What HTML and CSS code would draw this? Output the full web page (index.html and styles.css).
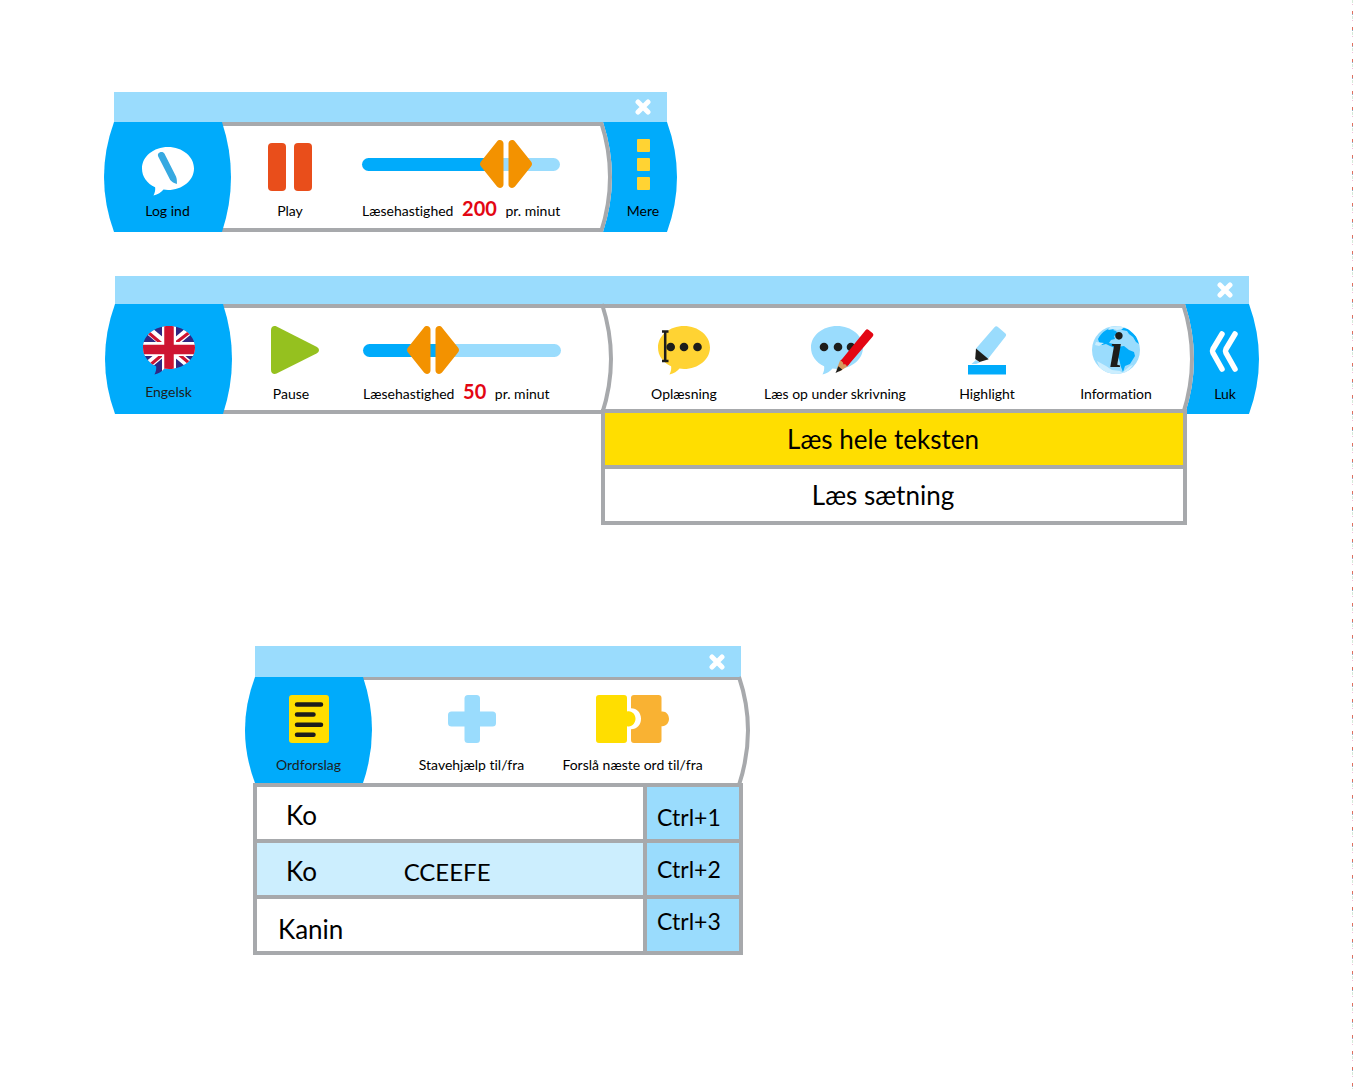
FILE: index.html
```html
<!DOCTYPE html>
<html lang="da">
<head>
<meta charset="utf-8">
<meta name="viewport" content="width=device-width, initial-scale=1">
<title>Læseværktøj</title>
<link rel="stylesheet" href="styles.css">
</head>
<body>
<svg class="defs" aria-hidden="true">
  <defs>
    <path id="bubble" d="M26 0C40.4 0 52 9.6 52 21.5S40.4 43 26 43c-1.500 0-3-.1-4.500-.4C19 45.500 16 47.500 11.500 48.500c1.500-3 2-6 1.600-8.300C5 36.500 0 29.800 0 21.500 0 9.600 11.600 0 26 0z"/>
    <clipPath id="bubble-clip"><use href="#bubble"/></clipPath>
    <clipPath id="globe-clip"><circle cx="24" cy="24" r="24"/></clipPath>
  </defs>
</svg>
<main class="page">

  <section class="panel panel--compact" aria-label="Oplæser">
    <header class="titlebar">
      <button class="close" type="button" aria-label="Luk vindue"><svg width="16" height="16" viewBox="0 0 16 16"><path d="M3 3l10 10M13 3L3 13"/></svg></button>
    </header>
    <div class="bar">
      <button class="tab" type="button">
        <svg class="tab__shape" viewBox="0 0 127 110" preserveAspectRatio="none"><path d="M10 0H118Q136 55 118 110H10Q-10 55 10 0z"/></svg>
        <svg class="icon" width="52" height="48" viewBox="0 0 52 48"><g transform="translate(0 4)"><use href="#bubble" fill="#fff"/><path fill="#36a9e1" d="M16.200 9.500c-.9-2 .1-3.400 1.500-4 1.700-.8 3.900-.5 4.800 1.300L34 29.600c.9 2.200 1 4.700.9 7.400-2.900-.7-5-2.200-6.700-4z"/></g></svg>
        <span class="label">Log ind</span>
      </button>
      <div class="main main--reader">
        <button class="tool" type="button">
          <svg class="icon" width="44" height="48" viewBox="0 0 44 48" fill="#e94e1b"><rect width="18" height="48" rx="4"/><rect x="26" width="18" height="48" rx="4"/></svg>
          <span class="label">Play</span>
        </button>
        <div class="speed">
          <input class="slider slider--fast" id="speed-a" type="range" min="0" max="247" value="200">
          <label class="label" for="speed-a">Læsehastighed <b>200</b> pr. minut</label>
        </div>
      </div>
      <button class="cap" type="button">
        <svg class="tab__shape" viewBox="0 0 78 110" preserveAspectRatio="none"><path d="M4 0H68Q88 55 68 110H4Q22 55 4 0z"/><path class="arc" d="M2 0Q20 55 2 110"/></svg>
        <svg class="icon" width="14" height="48" viewBox="0 0 14 48" fill="#ffd333"><rect x="1" y="-4" width="13" height="13" rx="1"/><rect x="1" y="15" width="13" height="13" rx="1"/><rect x="1" y="34" width="13" height="13" rx="1"/></svg>
        <span class="label">Mere</span>
      </button>
    </div>
  </section>

  <section class="panel panel--wide" aria-label="Oplæser, alle funktioner">
    <header class="titlebar titlebar--slim">
      <button class="close" type="button" aria-label="Luk vindue"><svg width="16" height="16" viewBox="0 0 16 16"><path d="M3 3l10 10M13 3L3 13"/></svg></button>
    </header>
    <div class="bar">
      <button class="tab" type="button">
        <svg class="tab__shape" viewBox="0 0 127 110" preserveAspectRatio="none"><path d="M10 0H118Q136 55 118 110H10Q-10 55 10 0z"/></svg>
        <svg class="icon" width="52" height="48" viewBox="0 0 52 48">
          <g clip-path="url(#bubble-clip)">
            <path fill="#312783" d="M0 0h52v49H0z"/>
            <path stroke="#fff" stroke-width="8" d="M-2 -2L54 45M54 -2L-2 45"/>
            <path stroke="#ce1431" stroke-width="3" d="M0 2L26 24M52 2L26 22M0 45L26 23M52 42L26 20"/>
            <path stroke="#fff" stroke-width="14" d="M26 0V49M0 23H52"/>
            <path stroke="#ce1431" stroke-width="9.500" d="M26 0V49M0 23.500H52"/>
          </g>
        </svg>
        <span class="label label--soft">Engelsk</span>
      </button>
      <div class="main main--reader">
        <button class="tool" type="button">
          <svg class="icon" width="56" height="48" viewBox="0 0 56 48"><path fill="#95c11f" d="M8 4C8 .8 10.800-.8 13.600.5L53.500 20.700c3.300 1.700 3.300 5 0 6.700L13.600 47.600C10.800 48.900 8 47.300 8 44z"/></svg>
          <span class="label">Pause</span>
        </button>
        <div class="speed">
          <input class="slider slider--slow" id="speed-b" type="range" min="0" max="167" value="50">
          <label class="label" for="speed-b">Læsehastighed <b>50</b> pr. minut</label>
        </div>
      </div>
      <div class="main main--tools">
        <svg class="divider" viewBox="0 0 12 110" preserveAspectRatio="none"><path class="arc" d="M1 0Q19 55 1 110"/></svg>
        <button class="tool" type="button" aria-haspopup="true" aria-expanded="true">
          <svg class="icon" width="52" height="48" viewBox="0 0 52 48"><use href="#bubble" fill="#ffd333"/><g fill="#1d1d1b"><circle cx="12.700" cy="21" r="4.300"/><circle cx="26" cy="21" r="4.300"/><circle cx="39.500" cy="21" r="4.300"/></g><path stroke="#1d1d1b" stroke-width="2.500" fill="none" d="M4 5.500h6.500M4 35h6.500M7.200 5.500V35"/></svg>
          <span class="label">Oplæsning</span>
        </button>
        <button class="tool" type="button">
          <svg class="icon" width="78" height="48" viewBox="-15 0 78 48"><use href="#bubble" fill="#9adcfd"/><g fill="#1d1d1b"><circle cx="13" cy="21" r="4.300"/><circle cx="27" cy="21" r="4.300"/><circle cx="40" cy="21" r="4.300"/></g><path fill="#e30613" d="M54.500 4.200c1-1.200 2-1.200 3.200-.3l3.700 3.200c1.200 1 1.300 2.200.3 3.400L37 39.500l-7.500-4.500z"/><path fill="#d69a5e" d="M29.300 34l7.700 6-8.500 5.500-3-2z"/><path fill="#e30613" d="M29.500 34.500l3-2 6 5-2.500 3c-1-2-2-2.400-3.600-2-.2-2-1-3.200-2.900-4z"/><path fill="#1d1d1b" d="M27.400 40.300l4 3.500-6.900 3.200z"/></svg>
          <span class="label">Læs op under skrivning</span>
        </button>
        <button class="tool" type="button">
          <svg class="icon" width="40" height="48" viewBox="0 0 40 48"><path fill="#9adcfd" d="M9 22.500L27.500 1.200c1-1.200 2.300-1.300 3.400-.3l7.300 6.300c1.100 1 1.300 2 .3 3.200L20.500 33.500zM9 34l4 2.500L9 38H4.500z"/><path fill="#1d1d1b" d="M9 22.500l12.700 10.700L12.500 36 8.200 33z"/><path fill="#00abfb" d="M1 39h38v9.500H1z"/></svg>
          <span class="label">Highlight</span>
        </button>
        <button class="tool" type="button">
          <svg class="icon" width="48" height="48" viewBox="0 0 48 48">
            <g clip-path="url(#globe-clip)">
              <path fill="#9adcfd" d="M0 0h48v48H0z"/>
              <path fill="#00abfb" d="M6 13C10 5 16 2 24 1l-3 3 3 1 2 3-4 2 1 3-4 1-2 3 3 1-2 2-4-2-4 1-3-3zM17 17l5 1 4 3-3 1-5-2zM28 1l8 2 8 7 3 8-3-2-3-5-4-3-2-3-5-1zM25 21l7-1 5 4 5 2 1 4-5 8-5 2-2 6-2-5-2-8-3-6z"/>
              <path fill="#cceefe" d="M18 1l9-1 6 1-3 2-5 1-3-1-6 1zM5 35l9 5 6 4 8 1 4 3H18C9 46 7 41 5 35zM32 45l6-5 3-1-4 5-5 4h-3zM4 16l8 1-5 3-4-1z"/>
            </g>
            <text class="info-i" x="24" y="41" text-anchor="middle">i</text>
          </svg>
          <span class="label">Information</span>
        </button>
        <ul class="menu">
          <li><button class="menu__item menu__item--active" type="button">Læs hele teksten</button></li>
          <li><button class="menu__item" type="button">Læs sætning</button></li>
        </ul>
      </div>
      <button class="cap" type="button">
        <svg class="tab__shape" viewBox="0 0 78 110" preserveAspectRatio="none"><path d="M4 0H68Q88 55 68 110H4Q22 55 4 0z"/><path class="arc" d="M2 0Q20 55 2 110"/></svg>
        <svg class="icon" width="32" height="48" viewBox="0 0 32 48" fill="none" stroke="#fff" stroke-width="5.500" stroke-linecap="round" stroke-linejoin="round"><path d="M13 8L4 23q-1 2 0 4L13 43M26 8L17 23q-1 2 0 4L26 43"/></svg>
        <span class="label">Luk</span>
      </button>
    </div>
  </section>

  <section class="panel panel--words" aria-label="Ordforslag">
    <header class="titlebar titlebar--tall">
      <button class="close" type="button" aria-label="Luk vindue"><svg width="16" height="16" viewBox="0 0 16 16"><path d="M3 3l10 10M13 3L3 13"/></svg></button>
    </header>
    <div class="bar bar--open">
      <button class="tab" type="button">
        <svg class="tab__shape" viewBox="0 0 127 110" preserveAspectRatio="none"><path d="M10 0H118Q136 55 118 110H10Q-10 55 10 0z"/></svg>
        <svg class="icon" width="40" height="48" viewBox="0 0 40 48"><rect width="40" height="48" rx="3" fill="#ffde00"/><path stroke="#1d1d1b" stroke-width="4.500" stroke-linecap="round" d="M8 9.500h24M8 19.500h16.500M8 29.700h24M8 39.700h16.500"/></svg>
        <span class="label label--soft">Ordforslag</span>
      </button>
      <div class="main main--words">
        <button class="tool" type="button">
          <svg class="icon" width="48" height="48" viewBox="0 0 48 48" fill="#9adcfd"><rect x="16.500" width="15.500" height="48" rx="3.500"/><rect y="16.500" width="48" height="15" rx="3.500"/></svg>
          <span class="label">Stavehjælp til/fra</span>
        </button>
        <button class="tool" type="button">
          <svg class="icon" width="73" height="48" viewBox="0 0 73 48"><path fill="#ffde00" d="M3 0h25q3 0 3 3v13.500c5-1.200 8.500 3 8.500 7.300s-3.500 8.500-8.500 7.400V45q0 3-3 3H3q-3 0-3-3V3q0-3 3-3z"/><path fill="#f9b233" d="M38 0h24.500q3 0 3 3v13.500c4.500-.6 7.500 3.200 7.500 7.300s-3 8-7.500 7.400V45q0 3-3 3H38q-3 0-3-3V34.300c6 0 10-4.600 10-10.500S41 13.400 35 13.300V3q0-3 3-3z"/></svg>
          <span class="label">Forslå næste ord til/fra</span>
        </button>
        <svg class="edge" viewBox="0 0 12 106" preserveAspectRatio="none"><path class="arc" d="M1 0Q19 53 1 108"/></svg>
      </div>
    </div>
    <table class="words">
      <tbody>
        <tr><td class="word">Ko</td><td class="key key--low">Ctrl+1</td></tr>
        <tr class="words__active"><td class="word">Ko <span class="hint">CCEEFE</span></td><td class="key">Ctrl+2</td></tr>
        <tr><td class="word word--wide">Kanin</td><td class="key key--high">Ctrl+3</td></tr>
      </tbody>
    </table>
  </section>
</main>
</body>
</html>
```
FILE: styles.css
```css
:root {
  --sky: #9adcfd;
  --blue: #00abfb;
  --grey: #a7a9ac;
  --yellow: #ffde00;
  --ink: #1d1d1b;
}

* { box-sizing: border-box; }

body {
  margin: 0;
  background: #fff;
  color: #000;
  font: 14px/20px Lato, "Noto Sans", sans-serif;
  font-variant-ligatures: none;
}

button {
  padding: 0;
  border: 0;
  background: none;
  color: inherit;
  font: inherit;
  font-variant-ligatures: none;
  cursor: pointer;
}

.defs { position: absolute; width: 0; height: 0; }

.page {
  min-height: 100vh;
  padding: 92px 93px 132px 104px;
  background: repeating-linear-gradient(#d5ead8 0 3px, #fff 3px 4px, #eebfdc 4px 5px, #fff 5px 11px, #e0705f 11px 14px, #8fb0c8 14px 15px, #fff 15px 16px) right top / 1px 100% no-repeat;
}

.panel { width: 100%; }
.panel--compact { max-width: 573px; margin-bottom: 44px; }
.panel--wide { max-width: 1154px; margin: 0 0 232px 1px; }
.panel--words { max-width: 506px; margin-left: 141px; }

.titlebar {
  display: flex;
  align-items: center;
  justify-content: flex-end;
  height: 30px;
  margin: 0 10px;
  padding-right: 12px;
  background: var(--sky);
}
.titlebar--slim { height: 28px; }
.titlebar--tall { height: 31px; }

.close { display: grid; place-items: center; width: 24px; height: 24px; }
.close svg { stroke: #fff; stroke-width: 5; stroke-linecap: round; }

.bar { display: flex; min-height: 110px; }
.bar--open { min-height: 106px; }

.tab, .cap {
  position: relative;
  z-index: 1;
  display: flex;
  flex: none;
  flex-direction: column;
  align-items: center;
  padding-top: 21px;
}
.tab { width: 127px; margin-right: -9px; }
.cap { width: 78px; margin-left: -3px; padding-left: 10px; }
.panel--wide .tab { padding-top: 22px; }
.panel--wide .tab .label { margin-top: 8px; }
.panel--wide .cap { padding-top: 22px; }
.bar--open .tab { padding-top: 18px; }

.tab__shape {
  position: absolute;
  inset: 0;
  z-index: -1;
  width: 100%;
  height: 100%;
  fill: var(--blue);
}
.arc { fill: none; stroke: var(--grey); stroke-width: 4; }

.icon { display: block; overflow: visible; }
.label { margin-top: 10px; white-space: nowrap; }
.label--soft { color: var(--ink); }
.label b { margin: 0 5px; color: #e30613; font-size: 20px; line-height: 16px; }
.bar--open .label { margin-top: 12px; }

.main {
  border: solid var(--grey);
  border-width: 4px 0;
}
.main--reader {
  display: grid;
  flex: 0 0 378px;
  grid-template-columns: 136px 1fr;
}
.panel--compact .main--reader { flex: 1; }
.main--tools {
  position: relative;
  display: grid;
  flex: 1;
  grid-template-columns: 150fr 152fr 152fr 106fr;
  padding: 0 15px 0 8px;
}
.main--words {
  position: relative;
  display: grid;
  flex: 1;
  grid-template-columns: 1fr 1fr;
  margin-right: 10px;
  padding: 0 28px;
  border-width: 3px 0 0;
}

.tool {
  display: flex;
  flex-direction: column;
  align-items: center;
  padding-top: 17px;
}
.panel--wide .tool { padding-top: 18px; }
.main--words .tool { padding-top: 15px; }

.divider, .edge { position: absolute; top: -4px; width: 12px; overflow: visible; }
.divider { left: 0; height: 110px; }
.edge { top: -3px; right: -9px; height: 106px; }

.speed { display: flex; flex-direction: column; padding: 14px 0 0 4px; }
.speed .label { margin-top: 12px; }
.panel--wide .speed { padding-top: 18px; }
.panel--wide .speed .label { margin-top: 9px; }

.slider {
  appearance: none;
  width: 198px;
  height: 48px;
  margin: 0;
  background: none;
}
.slider::-webkit-slider-runnable-track {
  height: 13px;
  border-radius: 7px;
  background: linear-gradient(to right, var(--blue) var(--fill), var(--sky) var(--fill));
}
.slider::-webkit-slider-thumb {
  appearance: none;
  width: 52px;
  height: 48px;
  margin-top: -18px;
  background: url("data:image/svg+xml,%3Csvg xmlns='http://www.w3.org/2000/svg' viewBox='0 0 52 48' fill='%23f39200'%3E%3Cpath d='M23.500 3.500V44.500C23.500 48 19 49 17 46.500L1 26.500Q-1 24 1 21.500L17 1.500C19-1 23.500 0 23.500 3.500zM28.500 3.500V44.500C28.500 48 33 49 35 46.500L51 26.500Q53 24 51 21.500L35 1.500C33-1 28.500 0 28.500 3.500z'/%3E%3C/svg%3E") center / 100% 100%;
}
.slider--fast { --fill: 71%; }
.slider--slow { --fill: 39%; }

.info-i { font: italic bold 50px "Liberation Serif", serif; fill: var(--ink); }

.menu {
  position: absolute;
  top: calc(100% - 1px);
  right: -3px;
  left: 0;
  z-index: 2;
  margin: 0;
  padding: 0;
  border: 4px solid var(--grey);
  list-style: none;
}
.menu li + li { border-top: 4px solid var(--grey); }
.menu__item {
  display: block;
  width: 100%;
  height: 52px;
  padding-right: 22px;
  background: #fff;
  font-size: 26px;
  line-height: 52px;
}
.menu__item--active { background: var(--yellow); }

.words {
  width: calc(100% - 16px);
  margin-left: 8px;
  border-collapse: collapse;
  table-layout: fixed;
}
.words td { height: 56px; border: 4px solid var(--grey); line-height: 28px; }
.words .word { padding: 4px 0 0 29px; font-size: 26px; }
.words .word--wide { padding: 8px 0 0 21px; }
.hint { margin-left: 80px; font-size: 24px; }
.words .key { width: 96px; padding: 0 0 0 10px; background: var(--sky); font-size: 23px; }
.words .key--low { padding-top: 8px; }
.words .key--high { padding-bottom: 8px; }
.words__active .word { background: #cceefe; }
```
